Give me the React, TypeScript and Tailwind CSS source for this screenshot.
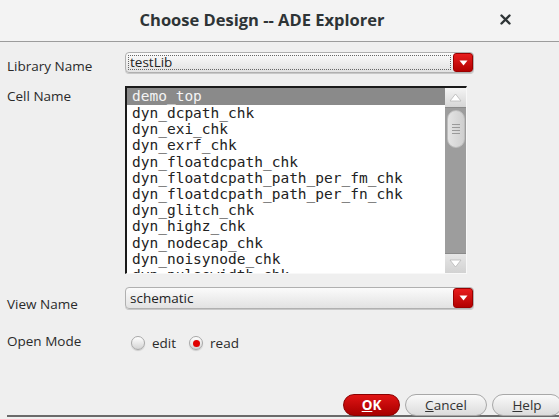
import React from "react";

const cells = [
  "demo_top",
  "dyn_dcpath_chk",
  "dyn_exi_chk",
  "dyn_exrf_chk",
  "dyn_floatdcpath_chk",
  "dyn_floatdcpath_path_per_fm_chk",
  "dyn_floatdcpath_path_per_fn_chk",
  "dyn_glitch_chk",
  "dyn_highz_chk",
  "dyn_nodecap_chk",
  "dyn_noisynode_chk",
  "dyn_pulsewidth_chk",
];

function RedArrow() {
  return (
    <div className="w-[20px] h-full rounded-[3px] bg-gradient-to-b from-[#e81c1c] to-[#b30000] border border-[#9a0000] flex items-center justify-center">
      <svg width="9" height="6" viewBox="0 0 9 6">
        <path d="M0.5 0.5 L8.5 0.5 L4.5 5.5 Z" fill="#ffffff" />
      </svg>
    </div>
  );
}

function Combo({ text, focus }: { text: string; focus?: boolean }) {
  return (
    <div className="w-[349px] flex rounded-[4px] border border-[#b0b0b0] bg-gradient-to-b from-[#fbfbfb] to-[#e2e2e2] shadow-[0_1px_0_#c8c8c8]">
      <div className="flex-1 flex items-center p-[2px]">
        <div
          className={
            "flex-1 h-full flex items-center pl-[1px] text-[13.5px] text-[#222] " +
            (focus ? "border border-dotted border-[#666]" : "border border-transparent")
          }
        >
          {text}
        </div>
      </div>
      <RedArrow />
    </div>
  );
}

function Radio({ checked }: { checked?: boolean }) {
  return (
    <div className="w-[14px] h-[14px] rounded-full border border-[#a8a8a8] bg-gradient-to-b from-[#ffffff] to-[#d4d4d4] flex items-center justify-center shadow-[0_1px_1px_rgba(0,0,0,0.15)]">
      {checked && <div className="w-[7px] h-[7px] rounded-full bg-[#e00000]" />}
    </div>
  );
}

function Scrollbar() {
  return (
    <div className="w-[21px] h-full bg-[#9d9d9d] flex flex-col items-center">
      <div className="w-[21px] h-[20px] bg-gradient-to-b from-[#f4f4f4] to-[#d6d6d6] border-b border-[#8a8a8a] flex items-center justify-center">
        <svg width="13" height="9" viewBox="0 0 13 9">
          <path d="M6.5 1 L12 8 L1 8 Z" fill="#ffffff" stroke="#b8b8b8" strokeWidth="0.8" />
        </svg>
      </div>
      <div className="mt-[2px] w-[18px] h-[38px] rounded-[9px] bg-gradient-to-r from-[#e4e4e4] to-[#cfcfcf] border border-[#bdbdbd] flex flex-col items-center justify-center gap-[2px]">
        <div className="w-[8px] h-[1px] bg-[#9a9a9a]" />
        <div className="w-[8px] h-[1px] bg-[#9a9a9a]" />
        <div className="w-[8px] h-[1px] bg-[#9a9a9a]" />
        <div className="w-[8px] h-[1px] bg-[#9a9a9a]" />
      </div>
      <div className="flex-1" />
      <div className="w-[21px] h-[20px] bg-gradient-to-b from-[#e6e6e6] to-[#d2d2d2] border-t border-[#8a8a8a] flex items-center justify-center">
        <svg width="13" height="9" viewBox="0 0 13 9">
          <path d="M1 1 L12 1 L6.5 8 Z" fill="#ffffff" stroke="#b8b8b8" strokeWidth="0.8" />
        </svg>
      </div>
    </div>
  );
}

export default function App() {
  return (
    <div
      className="w-[559px] h-[419px] bg-[#efefef] overflow-hidden flex flex-col text-[#2a2a2a]"
      style={{ fontFamily: '"Open Sans", "Noto Sans", sans-serif' }}
    >
      {/* Title bar */}
      <div className="h-[42px] shrink-0 bg-[#f3f3f3] border-b border-[#9c9c9c] flex items-center relative">
        <div className="flex-1 text-center text-[16.5px] font-bold text-[#2e3436] pr-[35px] pb-[1px]">
          Choose Design -- ADE Explorer
        </div>
        <div className="absolute right-[48px] top-[14px] text-[#2e3436]">
          <svg width="11" height="11" viewBox="0 0 11 11">
            <path d="M1.5 1.5 L9.5 9.5 M9.5 1.5 L1.5 9.5" stroke="#2e3436" strokeWidth="2.4" strokeLinecap="round" />
          </svg>
        </div>
      </div>

      {/* Body */}
      <div className="flex-1 flex flex-col pl-[7px] relative">
        {/* Library Name */}
        <div className="flex mt-[10px]">
          <div className="w-[118px] text-[13.5px] pt-[6px] leading-[16px]">Library Name</div>
          <div className="h-[21px] flex">
            <Combo text="testLib" focus />
          </div>
        </div>

        {/* Cell Name */}
        <div className="flex mt-[12px]">
          <div className="w-[118px] text-[13.5px] pt-[2px] leading-[16px]">Cell Name</div>
          <div className="w-[342px] h-[188px] border-t-2 border-l-2 border-[#1a1a1a] border-r border-b border-r-[#f8f8f8] border-b-[#f8f8f8] bg-white flex overflow-hidden">
            <div
              className="flex-1 overflow-hidden text-[14.5px] leading-[16px] text-[#222]"
              style={{ fontFamily: '"DejaVu Sans Mono", monospace' }}
            >
              {cells.map((c, i) => (
                <div
                  key={c}
                  className={
                    "pl-[5px] h-[16.2px] whitespace-nowrap " +
                    (i === 0 ? "bg-[#8a8a8a] text-[#f4f4f4] h-[17px]" : "")
                  }
                >
                  {c}
                </div>
              ))}
            </div>
            <Scrollbar />
          </div>
        </div>

        {/* View Name */}
        <div className="flex mt-[13px]">
          <div className="w-[118px] text-[13.5px] pt-[9px] leading-[16px]">View Name</div>
          <div className="h-[22px] flex">
            <Combo text="schematic" />
          </div>
        </div>

        {/* Open Mode */}
        <div className="flex mt-[19px] items-center">
          <div className="w-[118px] text-[13.5px] leading-[16px] -mt-[2px]">Open Mode</div>
          <div className="flex items-center text-[13.5px] mt-[2px]">
            <div className="ml-[6px]">
              <Radio />
            </div>
            <span className="ml-[7px]">edit</span>
            <div className="ml-[13px]">
              <Radio checked />
            </div>
            <span className="ml-[7px]">read</span>
          </div>
        </div>

        <div className="flex-1" />

        {/* Buttons */}
        <div className="flex justify-end mr-[-3px] mb-[-1px] relative z-10">
          <div className="w-[57px] h-[22px] rounded-full bg-gradient-to-b from-[#e01414] to-[#a80000] border border-[#8a0000] text-white font-bold text-[13.5px] flex items-center justify-center">
            <span>
              <span className="underline">O</span>K
            </span>
          </div>
          <div className="ml-[5px] w-[82px] h-[22px] rounded-full bg-gradient-to-b from-[#fafafa] to-[#dcdcdc] border border-[#a8a8a8] text-[13.5px] text-[#333] flex items-center justify-center">
            <span>
              <span className="underline">C</span>ancel
            </span>
          </div>
          <div className="ml-[5px] w-[70px] h-[22px] rounded-full bg-gradient-to-b from-[#fafafa] to-[#dcdcdc] border border-[#a8a8a8] text-[13.5px] text-[#333] flex items-center justify-center">
            <span>
              <span className="underline">H</span>elp
            </span>
          </div>
        </div>
        <div className="h-[2px] bg-[#6a6a6a] mb-[2px]" />
      </div>
    </div>
  );
}
